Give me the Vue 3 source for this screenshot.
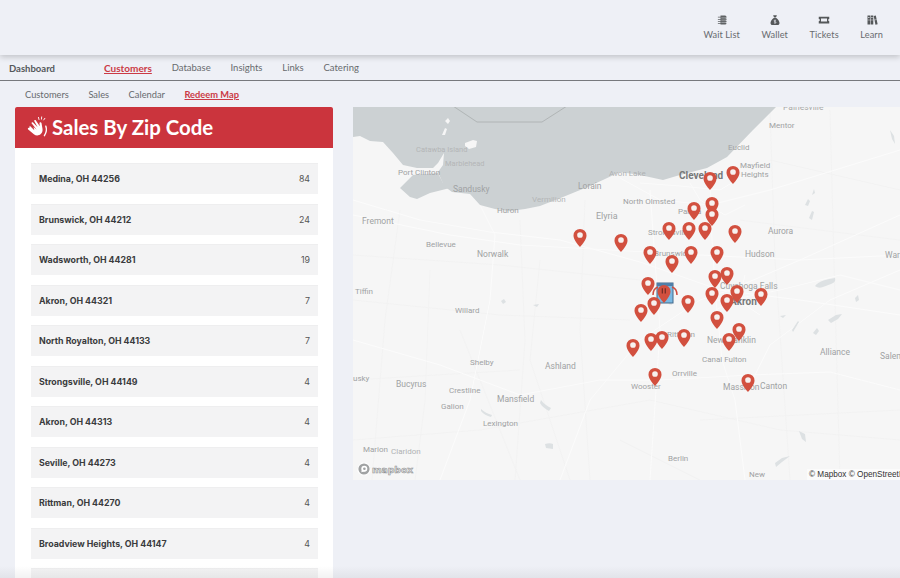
<template>
  <div class="page">
    <header class="topbar">
      <a v-for="item in topItems" :key="item.label" class="top-item">
        <svg viewBox="0 0 16 16" class="top-icon" v-html="item.icon"></svg>
        <span>{{ item.label }}</span>
      </a>
    </header>

    <nav class="mainnav">
      <span class="brand">Dashboard</span>
      <div class="mainlinks">
        <a v-for="link in mainLinks" :key="link" :class="{ active: link === 'Customers' }">{{ link }}</a>
      </div>
    </nav>

    <nav class="subnav">
      <a v-for="link in subLinks" :key="link" :class="{ active: link === 'Redeem Map' }">{{ link }}</a>
    </nav>

    <main class="content">
      <section class="card">
        <div class="card-head">
          <svg class="wave" viewBox="0 0 24 24" fill="#fff">
            <path d="M3 10.500l5 5-.9-3.600L10.600 15l-5.400-6.700c-.9-1 .4-2.200 1.400-1.300l5 5.300-3.600-6.500c-.7-1.200.9-2.100 1.700-1l4.300 6.500-.4-3.400c-.1-1.400 1.800-1.700 2.200-.3l1.100 6.200c.4 2.300-.3 4.300-1.900 5.900-2.100 2-5.300 2.100-7.500.2l-6.200-5.300c-1-.9.3-2.400 1.200-1.600z" />
            <path d="M20.500 11c1.300 3.800.8 7-1.500 10.500" fill="none" stroke="#fff" stroke-width="1.500" stroke-linecap="round" />
            <path d="M12.500 1.500l.6 2.300M16 1l-.2 2.400M19.500 2.500l-1.300 1.800" fill="none" stroke="#fff" stroke-width="1" stroke-linecap="round" />
          </svg>
          <h1>Sales By Zip Code</h1>
        </div>
        <ul class="zip-list">
          <li v-for="(row, i) in zipRows" :key="i" class="zip-row">
            <strong>{{ row.name }}</strong>
            <span>{{ row.count }}</span>
          </li>
        </ul>
      </section>

      <section class="map">
        <svg class="map-svg" viewBox="353 107 547 373">
          <rect x="353" y="107" width="547" height="373" fill="#f6f6f6" />
          <g fill="none" stroke="#f1f1f1" stroke-width="0.8">
            <path v-for="(d, i) in minorRoads" :key="'m' + i" :d="d" />
          </g>
          <g fill="none" stroke="#fbfbfb" stroke-width="1">
            <path v-for="(d, i) in majorRoads" :key="'r' + i" :d="d" />
          </g>
          <path :d="lake" fill="#ccd1d3" />
          <path d="M400 188L413 175L438 173L443 183L450 188L430 193L417 199L410 197Z" fill="#ccd1d3" />
          <path d="M465 143l8-3 4 1 -1 6 -7 2-4-3zM442 135l3-7 2 1-2 6zM445 121l3-3 2 3-2 3z" fill="#f6f6f6" />
          <path d="M453 106L477 122L542 122L567 106" fill="none" stroke="#a9adae" stroke-width="0.8" />
          <g fill="#dde1e3">
            <path v-for="(d, i) in ponds" :key="'p' + i" :d="d" />
          </g>
          <text
            v-for="label in mapLabels"
            :key="label.text"
            :x="label.x"
            :y="label.y"
            :font-size="label.size || 8"
            :font-weight="label.bold ? 700 : 400"
            :fill="label.color || '#a0a2a3'"
            class="map-label"
          >{{ label.text }}</text>

          <g transform="translate(665 293)">
            <rect x="-8" y="-10" width="16" height="20" fill="#7ab9e3" stroke="#43688a" stroke-width="1" />
            <rect x="-8" y="-10" width="16" height="3" fill="#4f7fa8" />
            <path d="M-12 2c0-4 2-7 5-8M12 2c0-4-2-7-5-8" fill="none" stroke="#cf4c3e" stroke-width="1.500" />
          </g>
          <g v-for="(pin, i) in pins" :key="i" :transform="`translate(${pin[0]} ${pin[1] - 1.500}) scale(1.05)`">
            <path d="M0-6.300a6.200 6.200 0 0 1 6.200 6.200c0 3.600-3.500 7.800-6.200 11.100-2.700-3.300-6.200-7.500-6.200-11.100a6.200 6.200 0 0 1 6.200-6.200z" fill="#d2503f" />
            <path v-if="i === brandedPin" d="M-1.600-3v5M1.200-3v5" stroke="#6b2a24" stroke-width="1.100" fill="none" />
            <circle v-else cy="-.5" r="2.700" fill="#f7f1ef" />
          </g>
        </svg>

        <div class="mapbox-logo">
          <svg viewBox="0 0 14 14" width="14" height="14">
            <circle cx="7" cy="7" r="6.200" fill="#a0a2a3" stroke="#fff" stroke-width="1.200" />
            <circle cx="7.300" cy="6.800" r="3" fill="#fff" />
            <path d="M4.300 10.200l1-4.400 3.300 3.300z" fill="#fff" />
            <circle cx="7.400" cy="6.700" r="1.300" fill="#a0a2a3" />
          </svg>
          <span>mapbox</span>
        </div>
        <div class="attribution">© Mapbox © OpenStreetMap</div>
      </section>
    </main>

    <div class="bottom-fade"></div>
  </div>
</template>

<script setup>
const topItems = [
  {
    label: 'Wait List',
    icon: '<path fill="#5f6264" d="M6 2h6a2 2 0 0 1 2 2v1h-1v1h1v2h-1v1h1v2h-1v1h1a2 2 0 0 1-2 2H6z"/><path fill="#5f6264" d="M2.500 3.500h5v1h-5zM2.500 6.500h5v1h-5zM2.500 9.500h5v1h-5zM2.500 12h5v1h-5z"/><path stroke="#eef0f6" stroke-width=".6" d="M7 5.200h7M7 8.200h7M7 11.200h7"/>'
  },
  {
    label: 'Wallet',
    icon: '<path fill="#55585a" d="M5.500 1.500h5L9.300 4.500H6.700zM6.300 5.200h3.400C12 6.800 14 9.500 14 12c0 1.700-1 2.800-2.700 2.800H4.700C3 14.800 2 13.700 2 12c0-2.500 2-5.200 4.300-6.800z"/><path fill="none" stroke="#eef0f6" stroke-width=".8" d="M9.400 8.800c-.5-.7-2.700-.8-2.700.4 0 1.300 2.700.7 2.700 2 0 1.100-2.200 1-2.800.3M8 7.700v5.200"/>'
  },
  {
    label: 'Tickets',
    icon: '<path fill="#55585a" fill-rule="evenodd" d="M1 3.500h14v3a1.500 1.500 0 0 0 0 3v3H1v-3a1.500 1.500 0 0 0 0-3zM4 6v4h8V6z"/>'
  },
  {
    label: 'Learn',
    icon: '<path fill="#55585a" fill-rule="evenodd" d="M2 2h3.500v12H2zM6.200 2h3.500v12H6.200zM10.300 2.600l2.800-.7 2.400 11.600-2.900.7zM2.800 4v1h1.900V4zM7 4v1h1.900V4z"/><path stroke="#eef0f6" stroke-width=".6" d="M2 8h7.700M10.900 8l3.300-.7"/>'
  }
]

const mainLinks = ['Customers', 'Database', 'Insights', 'Links', 'Catering']
const subLinks = ['Customers', 'Sales', 'Calendar', 'Redeem Map']

// last row only shows its top edge above the fold
const zipRows = [
  { name: 'Medina, OH 44256', count: 84 },
  { name: 'Brunswick, OH 44212', count: 24 },
  { name: 'Wadsworth, OH 44281', count: 19 },
  { name: 'Akron, OH 44321', count: 7 },
  { name: 'North Royalton, OH 44133', count: 7 },
  { name: 'Strongsville, OH 44149', count: 4 },
  { name: 'Akron, OH 44313', count: 4 },
  { name: 'Seville, OH 44273', count: 4 },
  { name: 'Rittman, OH 44270', count: 4 },
  { name: 'Broadview Heights, OH 44147', count: 4 },
  { name: '', count: '' }
]

const lake =
  'M353 106L353 137L360 136L370 141L383 142L393 153L403 165L417 168L433 168L438 163L444 153L443 165L438 172L444 186L452 192L470 194L480 205L495 209L510 211L525 209L540 206L563 197L590 186L620 172L640 175L663 180L680 175L707 168L727 157L753 130L777 106Z'

const majorRoads = [
  'M353 200L420 220L490 232L560 240L640 262L720 290L800 300L900 315',
  'M353 215L450 235L520 245L610 250L700 255L800 260L900 255',
  'M480 205L495 235L490 300L470 400L440 480',
  'M710 170L712 240L716 300L722 360L735 400L745 480',
  'M620 178L660 200L710 205L770 190L900 150',
  'M560 480L590 400L640 340L700 300L730 290L800 260L900 215',
  'M353 340L440 365L520 395L600 380L660 380L750 375L830 372L900 390',
  'M650 190L655 260L660 330L650 480',
  'M730 300L780 290L840 275L900 290',
  'M750 385L770 345L830 300L900 270',
  'M640 183L680 186L720 190L745 175',
  'M690 183L700 200L725 215L745 205',
  'M716 300L745 305L760 315M716 310L740 296L745 275'
]

const minorRoads = [
  'M400 210L385 320L372 480',
  'M430 270L425 400L415 480',
  'M520 220L525 340L515 480',
  'M585 200L580 330L590 480',
  'M353 255L500 265L640 280',
  'M353 300L500 315L630 320',
  'M353 440L480 430L650 400L780 430L900 440',
  'M540 260L530 360L570 480',
  'M770 110L775 260L790 480',
  'M830 110L835 300L840 480',
  'M770 160L900 190',
  'M740 220L900 240',
  'M700 420L900 410',
  'M620 440L700 480',
  'M353 380L520 370',
  'M460 330L520 480'
]

const ponds = [
  'M809 218l3-7 2 1-2 8zM812 195l2-6 1 4zM890 130l4 6 1 8-3-5zM805 205l3-6 2 2-2 5z',
  'M815 286c4-5 12-7 20-8 1 3-1 5-4 6l-8 3c-3 1-5 1-8-1z',
  'M792 330l6-9 1 1-6 10zM828 320l8-5 6-1-4 5-7 4zM813 333l4-5 2 3-3 4zM855 298l3-3 1 5-3 2z',
  'M541 400c3 4 6 6 10 8l-2 3c-3-2-7-4-9-8zM481 409c3 3 7 5 11 6l-1 2c-4-1-8-3-10-6z',
  'M545 444c3-1 6-1 8 0l0 5-7-1zM799 431l6 3 1 8-4-3zM775 463l7-5 8-2-8 6-6 5z',
  'M501 301l3-2 2 3-3 2zM533 305l6-1-2 3zM668 304l3-2 1 3zM780 316l6-1-3 3z'
]

const mapLabels = [
  { text: 'Painesville', x: 783, y: 110, size: 8.5, color: '#a8aaab' },
  { text: 'Mentor', x: 769, y: 128, size: 8 },
  { text: 'Euclid', x: 728, y: 150, size: 8 },
  { text: 'Mayfield', x: 740, y: 168 },
  { text: 'Heights', x: 741, y: 177 },
  { text: 'Cleveland', x: 679, y: 179, size: 10, bold: true, color: '#77797a' },
  { text: 'Avon Lake', x: 609, y: 176, color: '#b0b2b3' },
  { text: 'Catawba Island', x: 416, y: 152, size: 7.5, color: '#b4b6b7' },
  { text: 'Marblehead', x: 445, y: 166, size: 7.5, color: '#b4b6b7' },
  { text: 'Port Clinton', x: 398, y: 175 },
  { text: 'Sandusky', x: 453, y: 192, size: 8.5 },
  { text: 'Lorain', x: 578, y: 189, size: 8.5 },
  { text: 'Vermilion', x: 532, y: 202, color: '#b4b6b7' },
  { text: 'Huron', x: 497, y: 213 },
  { text: 'North Olmsted', x: 623, y: 204 },
  { text: 'Elyria', x: 596, y: 219, size: 9 },
  { text: 'Fremont', x: 362, y: 224, size: 8.5 },
  { text: 'Bellevue', x: 426, y: 247 },
  { text: 'Norwalk', x: 477, y: 257, size: 8.5 },
  { text: 'Parma', x: 678, y: 214 },
  { text: 'Strongsville', x: 648, y: 235 },
  { text: 'Aurora', x: 768, y: 234, size: 8.5 },
  { text: 'Brunswick', x: 654, y: 256 },
  { text: 'Hudson', x: 745, y: 257, size: 8.5 },
  { text: 'Warren', x: 885, y: 258, size: 8.5 },
  { text: 'Cuyahoga Falls', x: 720, y: 289, size: 8.5 },
  { text: 'Tiffin', x: 355, y: 294 },
  { text: 'Akron', x: 730, y: 305, size: 10, bold: true, color: '#77797a' },
  { text: 'Willard', x: 455, y: 313 },
  { text: 'Rittman', x: 667, y: 337 },
  { text: 'New Franklin', x: 707, y: 343, size: 8.5 },
  { text: 'Shelby', x: 470, y: 365 },
  { text: 'Ashland', x: 545, y: 369, size: 8.5 },
  { text: 'Canal Fulton', x: 702, y: 362 },
  { text: 'Alliance', x: 820, y: 355, size: 8.5 },
  { text: 'Salem', x: 880, y: 359, size: 8.5 },
  { text: 'Orrville', x: 672, y: 376 },
  { text: 'Wooster', x: 631, y: 389 },
  { text: 'Massillon', x: 723, y: 390, size: 8.5 },
  { text: 'Canton', x: 760, y: 389, size: 8.5 },
  { text: 'usky', x: 353, y: 381 },
  { text: 'Bucyrus', x: 396, y: 387, size: 8.5 },
  { text: 'Crestline', x: 449, y: 393 },
  { text: 'Mansfield', x: 497, y: 402, size: 8.5 },
  { text: 'Galion', x: 441, y: 409 },
  { text: 'Lexington', x: 483, y: 426 },
  { text: 'Marion', x: 363, y: 452 },
  { text: 'Claridon', x: 391, y: 454, color: '#b0b2b3' },
  { text: 'Berlin', x: 668, y: 461 },
  { text: 'New', x: 749, y: 477 }
]

const pins = [
  [580, 237], [621, 242], [710, 180], [733, 174], [712, 205], [712, 216], [694, 210],
  [669, 230], [689, 230], [705, 230], [735, 233], [650, 254], [691, 254], [717, 254],
  [672, 263], [715, 278], [727, 275], [648, 285], [664, 293], [654, 305], [641, 312],
  [688, 303], [712, 295], [737, 293], [727, 302], [761, 296], [717, 319], [739, 331],
  [729, 341], [633, 347], [651, 341], [662, 339], [684, 337], [655, 376], [748, 382]
]
const brandedPin = 18
</script>

<style>
html,
body {
  margin: 0;
  background: #eef0f6;
}
</style>

<style scoped>
.page {
  position: relative;
  height: 578px;
  overflow: hidden;
  background: #eef0f6;
  font-family: Lato, "Liberation Sans", sans-serif;
  color: #686b6e;
}
a {
  cursor: pointer;
}
.topbar {
  display: flex;
  justify-content: flex-end;
  gap: 21.5px;
  height: 55px;
  padding-right: 17px;
  box-sizing: border-box;
  background: #eef0f6;
  box-shadow: 0 2px 6px rgba(0, 0, 0, 0.2);
  position: relative;
}
.top-item {
  display: flex;
  flex-direction: column;
  align-items: center;
  padding-top: 14px;
  font-size: 9.2px;
  letter-spacing: 0.1px;
}
.top-icon {
  width: 12px;
  height: 12px;
  margin-bottom: 2.500px;
}
.mainnav {
  display: flex;
  align-items: center;
  height: 26px;
  padding: 1px 0 0 9px;
  box-sizing: border-box;
  border-bottom: 1.500px solid #77797d;
  font-size: 9.5px;
}
.brand {
  width: 95px;
  font-weight: 700;
  color: #55585b;
}
.mainlinks {
  display: flex;
  gap: 19.8px;
}
.mainlinks .active {
  font-size: 10px;
}
.active {
  color: #cb3a45;
  font-weight: 700;
  text-decoration: underline;
}
.subnav {
  display: flex;
  gap: 19.5px;
  height: 26px;
  align-items: center;
  padding-left: 25px;
  font-size: 9.3px;
}
.content {
  display: flex;
  align-items: flex-start;
  gap: 20px;
  padding-left: 15px;
}
.card {
  width: 318px;
  flex: none;
  background: #fff;
}
.card-head {
  display: flex;
  align-items: center;
  gap: 3px;
  height: 41px;
  padding: 0 0 2px 12px;
  box-sizing: border-box;
  background: #cb343d;
  border-radius: 2px 2px 0 0;
  color: #fff;
}
.wave {
  width: 22px;
  height: 22px;
}
.card-head h1 {
  margin: 0;
  font-size: 20.4px;
  font-weight: 700;
}
.zip-list {
  list-style: none;
  margin: 0;
  padding: 15px 15px 0 16px;
}
.zip-row {
  display: flex;
  justify-content: space-between;
  align-items: center;
  height: 31px;
  margin-bottom: 9.55px;
  padding: 0 8px 1px;
  background: #f3f3f4;
  border-top: 1px solid #eeeeef;
  box-sizing: border-box;
  font-family: Inter, "Liberation Sans", sans-serif;
  font-size: 8.8px;
  color: #555;
}
.zip-row strong {
  color: #3a3b3d;
}
.map {
  position: relative;
  flex: 1;
  height: 373px;
  overflow: hidden;
}
.map-svg {
  display: block;
  width: 547px;
  height: 373px;
}
.map-label {
  font-family: Roboto, "Liberation Sans", sans-serif;
}
.mapbox-logo {
  position: absolute;
  left: 4px;
  bottom: 4px;
  display: flex;
  align-items: center;
  gap: 1px;
  font-family: "DejaVu Sans", sans-serif;
  font-size: 9.2px;
  font-weight: 700;
  color: #ececec;
  -webkit-text-stroke: 0.6px #8f9192;
}
.attribution {
  position: absolute;
  right: 0;
  bottom: 0;
  width: 91px;
  height: 11px;
  padding-left: 2px;
  line-height: 11px;
  white-space: nowrap;
  overflow: hidden;
  background: rgba(255, 255, 255, 0.6);
  font-family: "Liberation Sans", sans-serif;
  font-size: 8.2px;
  color: #333;
}
.bottom-fade {
  position: absolute;
  left: 0;
  right: 0;
  bottom: 0;
  height: 12px;
  background: linear-gradient(rgba(0, 0, 0, 0), rgba(0, 0, 0, 0.05));
  pointer-events: none;
}
</style>
